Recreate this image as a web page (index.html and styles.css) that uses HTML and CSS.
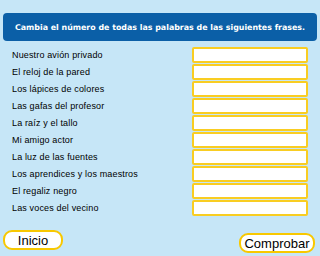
FILE: index.html
```html
<!DOCTYPE html>
<html lang="es">
<head>
<meta charset="utf-8">
<link rel="stylesheet" href="styles.css">
</head>
<body>
<div class="page">
  <div class="header">Cambia el número de todas las palabras de las siguientes frases.</div>
  <div class="rows">
    <div class="row"><span class="label">Nuestro avión privado</span><div class="field"></div></div>
    <div class="row"><span class="label">El reloj de la pared</span><div class="field"></div></div>
    <div class="row"><span class="label">Los lápices de colores</span><div class="field"></div></div>
    <div class="row"><span class="label">Las gafas del profesor</span><div class="field"></div></div>
    <div class="row"><span class="label">La raíz y el tallo</span><div class="field"></div></div>
    <div class="row"><span class="label">Mi amigo actor</span><div class="field"></div></div>
    <div class="row"><span class="label">La luz de las fuentes</span><div class="field"></div></div>
    <div class="row"><span class="label">Los aprendices y los maestros</span><div class="field"></div></div>
    <div class="row"><span class="label">El regaliz negro</span><div class="field"></div></div>
    <div class="row"><span class="label">Las voces del vecino</span><div class="field"></div></div>
  </div>
  <div class="footer">
    <div class="btn btn-start">Inicio</div>
    <div class="btn btn-check">Comprobar</div>
  </div>
</div>
</body>
</html>
```
FILE: styles.css
```css
html, body {
  margin: 0;
  padding: 0;
  background: #c6e6f7;
}
.page {
  width: 320px;
  height: 256px;
  padding: 13px 3px 0 3px;
  box-sizing: border-box;
  display: flex;
  flex-direction: column;
}
.header {
  height: 28px;
  background: #0b5fa7;
  border-radius: 4px;
  color: #fff;
  font-family: "DejaVu Sans", Verdana, sans-serif;
  font-weight: bold;
  font-size: 7.9px;
  display: flex;
  align-items: center;
  justify-content: center;
}
.rows {
  margin-top: 6px;
  display: flex;
  flex-direction: column;
  gap: 1px;
}
.row {
  display: flex;
  align-items: center;
  justify-content: space-between;
  height: 16px;
  padding: 0 9px 0 9px;
}
.label {
  font-family: "Liberation Sans", Arial, sans-serif;
  font-size: 9px;
  letter-spacing: 0.15px;
  color: #000;
}
.field {
  width: 116px;
  height: 16px;
  box-sizing: border-box;
  background: #fff;
  border: 2px solid #f9cd22;
  border-radius: 2px;
}
.footer {
  display: flex;
  justify-content: space-between;
  margin-top: 14px;
  padding-right: 2px;
}
.btn {
  box-sizing: border-box;
  background: #fff;
  border: 2px solid #f8c800;
  border-radius: 9px;
  font-family: "Liberation Sans", Arial, sans-serif;
  font-size: 13px;
  color: #000;
  display: flex;
  align-items: center;
  justify-content: center;
}
.btn-start {
  width: 60px;
  height: 20px;
}
.btn-check {
  width: 76px;
  height: 20px;
  margin-top: 3px;
}
```
